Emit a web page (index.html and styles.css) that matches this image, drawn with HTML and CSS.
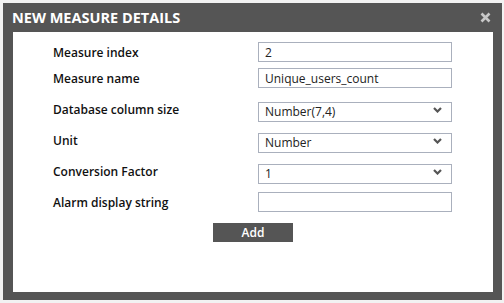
FILE: index.html
```html
<!doctype html>
<html>
<head>
<meta charset="utf-8">
<title>New measure details</title>
<link rel="stylesheet" href="styles.css">
</head>
<body>
<div class="dialog">
	<div class="titleBar">
		<h1>NEW MEASURE DETAILS</h1>
		<svg class="close" width="11" height="11" viewBox="0 0 11 11"><path d="M1.5 1.5 L9.5 9.5 M9.5 1.5 L1.5 9.5" stroke="#c8c8c8" stroke-width="2.6"/></svg>
	</div>
	<div class="dialogBody">
		<div class="form">
			<div class="row">
				<label>Measure index</label>
				<input class="field" type="text" value="2">
			</div>
			<div class="row tight">
				<label>Measure name</label>
				<input class="field" type="text" value="Unique_users_count">
			</div>
			<div class="row">
				<label>Database column size</label>
				<div class="selectBox">
					<select class="field"><option>Number(7,4)</option></select>
					<svg class="arrow" width="9" height="6" viewBox="0 0 9 6"><path d="M1 1 L4.5 4.5 L8 1" fill="none" stroke="#555" stroke-width="2.2"/></svg>
				</div>
			</div>
			<div class="row">
				<label>Unit</label>
				<div class="selectBox">
					<select class="field"><option>Number</option></select>
					<svg class="arrow" width="9" height="6" viewBox="0 0 9 6"><path d="M1 1 L4.5 4.5 L8 1" fill="none" stroke="#555" stroke-width="2.2"/></svg>
				</div>
			</div>
			<div class="row">
				<label>Conversion Factor</label>
				<div class="selectBox">
					<select class="field"><option>1</option></select>
					<svg class="arrow" width="9" height="6" viewBox="0 0 9 6"><path d="M1 1 L4.5 4.5 L8 1" fill="none" stroke="#555" stroke-width="2.2"/></svg>
				</div>
			</div>
			<div class="row">
				<label>Alarm display string</label>
				<input class="field" type="text" value="">
			</div>
		</div>
		<div class="actions">
			<button class="btn">Add</button>
		</div>
	</div>
</div>
</body>
</html>
```

FILE: styles.css
```css
*{ margin:0; padding:0; box-sizing:border-box;}
body{ background:#f2f2f2; font-family:"Open Sans","DejaVu Sans",sans-serif;}
.dialog{ width:499px; height:297px; margin:3px 0 0 3px; background:#555; display:flex; flex-direction:column;}
.dialog .titleBar{ height:29px; display:flex; align-items:center; justify-content:space-between; padding:0 11px 1px 9px;}
.dialog .titleBar h1{ font-size:14.5px; font-weight:700; color:#fff;}
.dialog .dialogBody{ flex:1; background:#fff; margin:0 9px 8px 10px; padding:10px 0 0 40px;}
.form .row{ display:flex; align-items:center; height:20px; margin-top:11px;}
.form .row:first-child{ margin-top:0;}
.form .row.tight{ margin-top:6px;}
.form label{ width:205px; font-size:12px; font-weight:600; color:#111;}
.form .field{ width:194px; height:20px; border:1px solid #aab0bd; background:#fff; font-family:"Open Sans",sans-serif; font-size:12px; line-height:18px; color:#222; padding:0 6px; outline:none;}
.selectBox{ position:relative; width:194px; height:20px;}
.selectBox select{ appearance:none; -webkit-appearance:none; border-radius:0; padding:0 5px;}
.selectBox .arrow{ position:absolute; right:10px; top:8px; pointer-events:none;}
.actions{ width:400px; display:flex; justify-content:center; margin-top:11px;}
.btn{ width:80px; height:19px; border:0; background:#555; color:#fff; font-family:"Open Sans",sans-serif; font-size:12px; font-weight:600;}
```
